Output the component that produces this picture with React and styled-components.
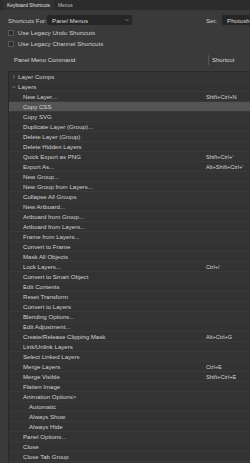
import React from "react";
import styled, { createGlobalStyle } from "styled-components";

const Global = createGlobalStyle`
  html, body { margin: 0; padding: 0; background: #3a3a3a; }
  body { font-family: "Liberation Sans", Arial, sans-serif; color: #cfcfcf; overflow: hidden; }
`;

const Page = styled.div`
  width: 250px;
  height: 463px;
  overflow: hidden;
  display: flex;
  flex-direction: column;
  background: #3a3a3a;
`;

const TabBar = styled.div`
  height: 10px;
  background: #2c2c2c;
  display: flex;
  align-items: stretch;
  padding-left: 3px;
`;

const Tab = styled.div`
  font-size: 4.9px;
  display: flex;
  align-items: center;
  padding: 0 4px;
  color: ${(p) => (p.$active ? "#e0e0e0" : "#bdbdbd")};
  background: ${(p) => (p.$active ? "#323232" : "transparent")};
`;

const TopRow = styled.div`
  height: 10px;
  margin-top: 5px;
  display: flex;
  align-items: center;
  padding-left: 8px;
  font-size: 6.2px;
`;

const Label = styled.span`
  width: 39px;
  white-space: nowrap;
`;

const Select = styled.div`
  height: 10px;
  width: ${(p) => p.$w}px;
  background: #262626;
  display: flex;
  align-items: center;
  justify-content: space-between;
  padding: 0 3px 0 5px;
  box-sizing: border-box;
  font-size: 6.2px;
  color: #dcdcdc;
  border-radius: 1px;
  white-space: nowrap;
  overflow: hidden;
`;

const Spacer = styled.div`
  flex: 1;
`;

const SetLabel = styled.span`
  margin-right: 5px;
`;

const CheckRow = styled.label`
  height: 11px;
  display: flex;
  align-items: center;
  padding-left: 8px;
  font-size: 6.2px;
  gap: 4px;
  white-space: nowrap;
  margin-top: ${(p) => p.$mt || 0}px;
`;

const Box = styled.span`
  width: 4px;
  height: 4px;
  border: 1px solid #5a5a5a;
  background: #2e2e2e;
  display: inline-block;
`;

const Header = styled.div`
  height: 11px;
  margin-top: 5px;
  display: flex;
  align-items: center;
  font-size: 6px;
  color: #d8d8d8;
`;

const HeadCmd = styled.div`
  width: 194px;
  padding-left: 14px;
`;

const HeadShort = styled.div`
  border-left: 1px solid #555;
  padding-left: 3px;
  height: 10px;
  display: flex;
  align-items: center;
`;

const List = styled.div`
  margin-top: 6px;
  margin-left: 8px;
  border-left: 1px solid #2a2a2a;
  border-top: 1px solid #2c2c2c;
  background: #333333;
  flex: 1;
`;

const Row = styled.div`
  height: 10px;
  box-sizing: border-box;
  border-bottom: 1px solid #3a3a3a;
  display: flex;
  align-items: center;
  font-size: 6.1px;
  color: #d2d2d2;
  background: ${(p) => (p.$sel ? "#545454" : "transparent")};
  white-space: nowrap;
`;

const Cmd = styled.div`
  width: 197px;
  box-sizing: border-box;
  padding-left: ${(p) => p.$indent}px;
  display: flex;
  align-items: center;
  gap: 2px;
`;

const Arrow = styled.span`
  width: 5px;
  display: inline-flex;
  align-items: center;
  justify-content: center;
`;

const Short = styled.div`
  font-size: 5.6px;
  color: #d6d6d6;
`;

const Chevron = ({ open }) => (
  <svg width="4" height="4" viewBox="0 0 4 4">
    {open ? (
      <path d="M0.5 1.2 L2 2.8 L3.5 1.2" fill="none" stroke="#aaa" strokeWidth="0.6" />
    ) : (
      <path d="M1.2 0.5 L2.8 2 L1.2 3.5" fill="none" stroke="#aaa" strokeWidth="0.6" />
    )}
  </svg>
);

const items = [
  { t: "Layer Comps", group: true, open: false },
  { t: "Layers", group: true, open: true },
  { t: "New Layer...", s: "Shift+Ctrl+N" },
  { t: "Copy CSS", sel: true },
  { t: "Copy SVG" },
  { t: "Duplicate Layer (Group)..." },
  { t: "Delete Layer (Group)" },
  { t: "Delete Hidden Layers" },
  { t: "Quick Export as PNG", s: "Shift+Ctrl+'" },
  { t: "Export As...", s: "Alt+Shift+Ctrl+'" },
  { t: "New Group..." },
  { t: "New Group from Layers..." },
  { t: "Collapse All Groups" },
  { t: "New Artboard..." },
  { t: "Artboard from Group..." },
  { t: "Artboard from Layers..." },
  { t: "Frame from Layers..." },
  { t: "Convert to Frame" },
  { t: "Mask All Objects" },
  { t: "Lock Layers...", s: "Ctrl+/" },
  { t: "Convert to Smart Object" },
  { t: "Edit Contents" },
  { t: "Reset Transform" },
  { t: "Convert to Layers" },
  { t: "Blending Options..." },
  { t: "Edit Adjustment..." },
  { t: "Create/Release Clipping Mask", s: "Alt+Ctrl+G" },
  { t: "Link/Unlink Layers" },
  { t: "Select Linked Layers" },
  { t: "Merge Layers", s: "Ctrl+E" },
  { t: "Merge Visible", s: "Shift+Ctrl+E" },
  { t: "Flatten Image" },
  { t: "Animation Options>" },
  { t: "Automatic", sub: true },
  { t: "Always Show", sub: true },
  { t: "Always Hide", sub: true },
  { t: "Panel Options..." },
  { t: "Close" },
  { t: "Close Tab Group" },
];

export default function App() {
  return (
    <Page>
      <Global />
      <TabBar>
        <Tab $active>Keyboard Shortcuts</Tab>
        <Tab>Menus</Tab>
      </TabBar>
      <TopRow>
        <Label>Shortcuts For:</Label>
        <Select $w={85}>
          <span>Panel Menus</span>
          <Chevron open />
        </Select>
        <Spacer />
        <SetLabel>Set:</SetLabel>
        <Select $w={28}>
          <span>Photosho</span>
        </Select>
      </TopRow>
      <CheckRow $mt={2}>
        <Box />
        Use Legacy Undo Shortcuts
      </CheckRow>
      <CheckRow>
        <Box />
        Use Legacy Channel Shortcuts
      </CheckRow>
      <Header>
        <HeadCmd>Panel Menu Command</HeadCmd>
        <HeadShort>Shortcut</HeadShort>
      </Header>
      <List>
        {items.map((it, i) => (
          <Row key={i} $sel={it.sel}>
            {it.group ? (
              <Cmd $indent={2}>
                <Arrow>
                  <Chevron open={it.open} />
                </Arrow>
                {it.t}
              </Cmd>
            ) : (
              <Cmd $indent={it.sub ? 20 : 14}>{it.t}</Cmd>
            )}
            <Short>{it.s || ""}</Short>
          </Row>
        ))}
      </List>
    </Page>
  );
}
